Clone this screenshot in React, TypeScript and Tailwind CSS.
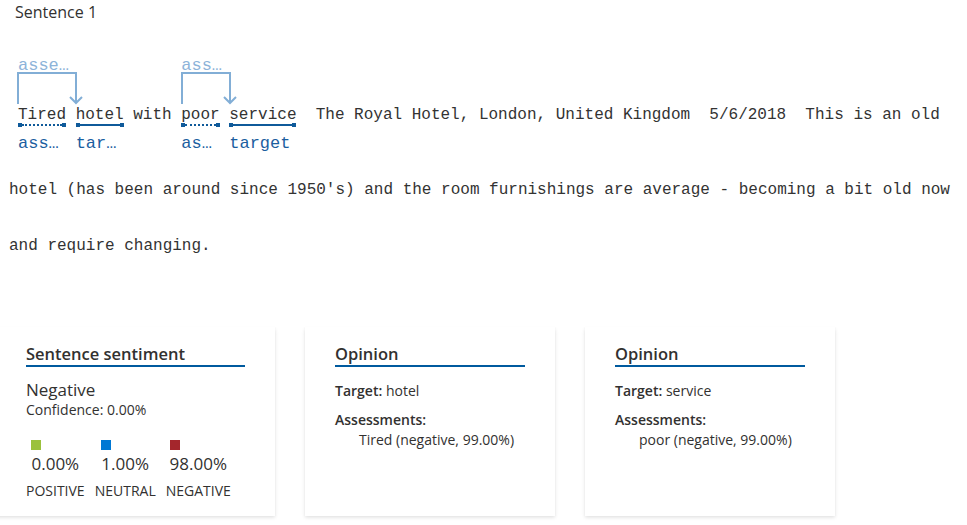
import React from "react";

const mono = { fontFamily: '"Liberation Mono", "DejaVu Sans Mono", monospace' };

type WordProps = {
  text: string;
  top?: string;
  label: string;
  dotted?: boolean;
};

const Word: React.FC<WordProps> = ({ text, top, label, dotted }) => {
  return (
    <div className="flex flex-col">
      <div className="h-[20px] w-0 overflow-visible whitespace-nowrap pt-[1px] text-[17px] leading-[20px] text-[#8db3d9]">
        {top}
      </div>
      <div className="h-[30px]" />
      <div className="h-[20px] leading-[20px] text-[#333]">{text}</div>
      <div className="-mt-[2px] flex h-[4px] items-center">
        <div className="h-[4px] w-[4px] bg-[#0f5a9a]" />
        <div
          className={
            dotted
              ? "flex-1 border-t-2 border-dotted border-[#0f5a9a]"
              : "flex-1 border-t-2 border-solid border-[#0f5a9a]"
          }
        />
        <div className="h-[4px] w-[4px] bg-[#0f5a9a]" />
      </div>
      <div className="mt-[7px] whitespace-nowrap text-[17px] leading-[20px] text-[#1b5e9f]">
        {label}
      </div>
    </div>
  );
};

const Plain: React.FC<{ text: string }> = ({ text }) => (
  <div className="flex flex-col">
    <div className="h-[50px]" />
    <div className="h-[20px] leading-[20px] text-[#333]">{text}</div>
  </div>
);

const Card: React.FC<{ title: string; wide?: boolean; children: React.ReactNode }> = ({
  title,
  wide,
  children,
}) => (
  <div
    className={
      (wide ? "w-[279px] " : "w-[250px] ") +
      "h-[189px] shrink-0 bg-white px-[30px] pt-[16px] shadow-[0_1.6px_3.6px_rgba(0,0,0,0.13),0_0.3px_0.9px_rgba(0,0,0,0.11)]"
    }
  >
    <div className="border-b-2 border-[#005a9e] text-[16.5px] font-semibold leading-[22px] text-[#323130]">
      {title}
    </div>
    {children}
  </div>
);

const Score: React.FC<{ color: string; value: string; label: string }> = ({
  color,
  value,
  label,
}) => (
  <div className="flex flex-col items-center">
    <div className="flex flex-col items-start">
      <div className={"h-[10px] w-[10px] " + color} />
      <div className="mt-[2px] text-[17px] leading-[24px] text-[#323130]">{value}</div>
    </div>
    <div className="mt-[6px] text-[14px] leading-[18px] text-[#323130]">{label}</div>
  </div>
);

export default function App() {
  return (
    <div
      className="min-h-screen w-[967px] overflow-hidden bg-white text-[#323130]"
      style={{ fontFamily: '"Segoe UI", "Open Sans", "Noto Sans", sans-serif' }}
    >
      <div className="pl-[15px] pt-[2px] text-[16px] leading-[20px]">Sentence 1</div>

      <div className="text-[16px]" style={mono}>
        {/* annotated first line */}
        <div className="relative mt-[33px] flex h-[107px] items-start whitespace-pre pl-[18px]">
          <svg
            className="absolute left-0 top-0"
            width="300"
            height="60"
            fill="none"
            stroke="#82aed6"
            strokeWidth="2"
          >
            <path d="M18 49 V18 H76 V48" />
            <path d="M70 42 L76 48 L82 42" />
            <path d="M182 49 V18 H230 V48" />
            <path d="M224 42 L230 48 L236 42" />
          </svg>
          <Word text="Tired" top="asse…" label="ass…" dotted />
          <Plain text=" " />
          <Word text="hotel" label="tar…" />
          <Plain text=" with " />
          <Word text="poor" top="ass…" label="as…" dotted />
          <Plain text=" " />
          <Word text="service" label="target" />
          <Plain text="  The Royal Hotel, London, United Kingdom  5/6/2018  This is an old" />
        </div>

        <div className="whitespace-pre pl-[9px] leading-[56px] text-[#333]">
          hotel (has been around since 1950's) and the room furnishings are average - becoming a bit old now
        </div>
        <div className="whitespace-pre pl-[9px] leading-[56px] text-[#333]">and require changing.</div>
      </div>

      <div className="-ml-[4px] mt-[53px] flex items-start gap-[30px]">
        <Card title="Sentence sentiment" wide>
          <div className="mt-[11px] text-[17px] leading-[24px]">Negative</div>
          <div className="text-[14px] leading-[16px]">Confidence: 0.00%</div>
          <div className="mt-[22px] flex gap-[10px]">
            <Score color="bg-[#9bc13c]" value="0.00%" label="POSITIVE" />
            <Score color="bg-[#0078d4]" value="1.00%" label="NEUTRAL" />
            <Score color="bg-[#a4262c]" value="98.00%" label="NEGATIVE" />
          </div>
        </Card>
        <Card title="Opinion">
          <div className="mt-[14px] text-[14px] leading-[20px]">
            <span className="font-semibold">Target:</span> hotel
          </div>
          <div className="mt-[9px] text-[14px] font-semibold leading-[20px]">Assessments:</div>
          <div className="pl-[24px] text-[14px] leading-[19px]">Tired (negative, 99.00%)</div>
        </Card>
        <Card title="Opinion">
          <div className="mt-[14px] text-[14px] leading-[20px]">
            <span className="font-semibold">Target:</span> service
          </div>
          <div className="mt-[9px] text-[14px] font-semibold leading-[20px]">Assessments:</div>
          <div className="pl-[24px] text-[14px] leading-[19px]">poor (negative, 99.00%)</div>
        </Card>
      </div>
    </div>
  );
}
